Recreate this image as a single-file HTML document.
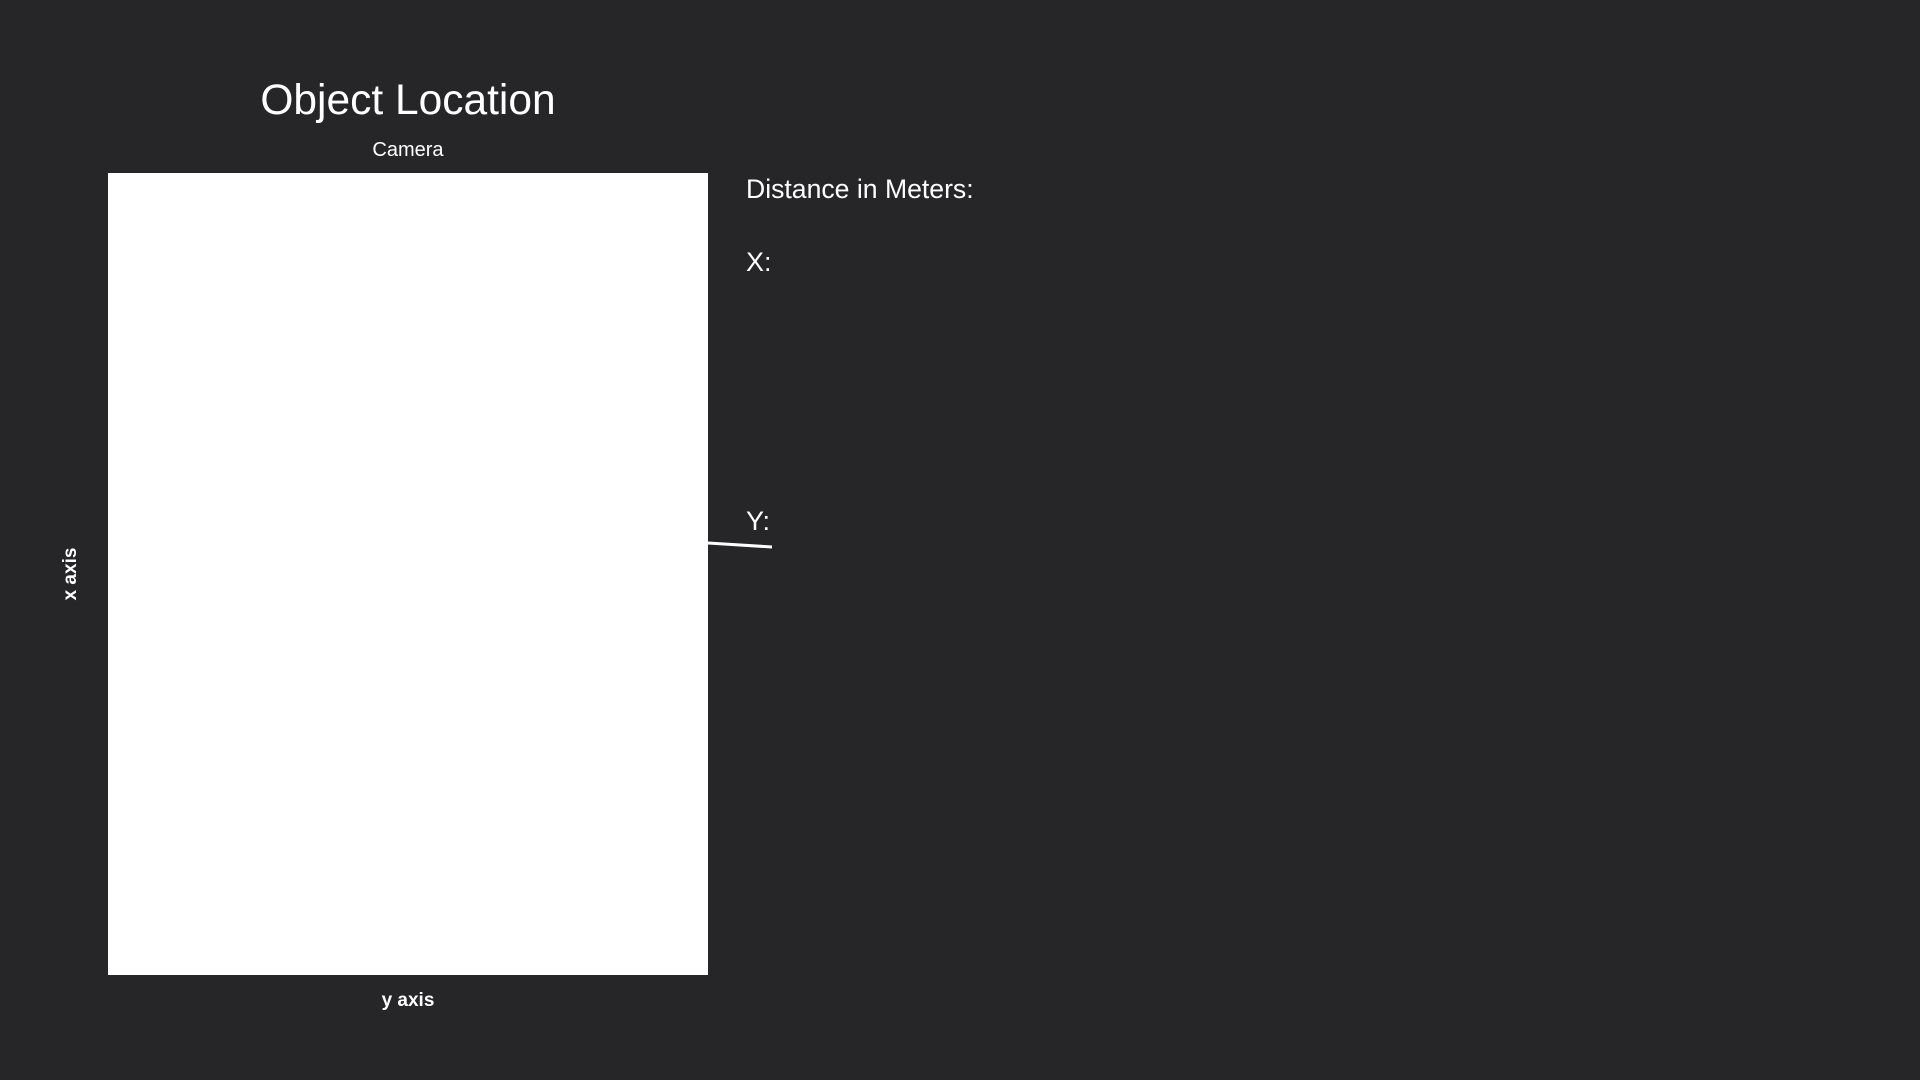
<!DOCTYPE html>
<html><head><meta charset="utf-8"><style>
html,body{margin:0;padding:0;width:1920px;height:1080px;background:#262528;overflow:hidden;font-family:"Liberation Sans",sans-serif;color:#fff;position:relative}
.a{position:absolute;white-space:nowrap}
</style></head><body>
<div class="a" style="left:0;width:816px;text-align:center;top:75px;font-size:42.5px;line-height:52px">Object Location</div>
<div class="a" style="left:0;width:816px;text-align:center;top:138px;font-size:20px;line-height:24px">Camera</div>
<div class="a" style="left:108px;top:173px;width:600px;height:802px;background:#fff"></div>
<div class="a" style="left:746px;top:173px;font-size:26.6px;line-height:32px">Distance in Meters:</div>
<div class="a" style="left:746px;top:246px;font-size:27px;line-height:32px">X:</div>
<div class="a" style="left:746px;top:505px;font-size:27px;line-height:32px">Y:</div>
<svg class="a" style="left:0;top:0" width="1920" height="1080"><line x1="708" y1="543" x2="772" y2="547" stroke="#fff" stroke-width="3"/></svg>
<div class="a" style="left:0;width:816px;text-align:center;top:990px;font-size:19px;font-weight:bold;line-height:22px">y axis</div>
<div class="a" style="left:71px;top:574px;font-size:19px;font-weight:bold;line-height:22px;transform:translate(-50%,-50%) rotate(-90deg)">x axis</div>
</body></html>
